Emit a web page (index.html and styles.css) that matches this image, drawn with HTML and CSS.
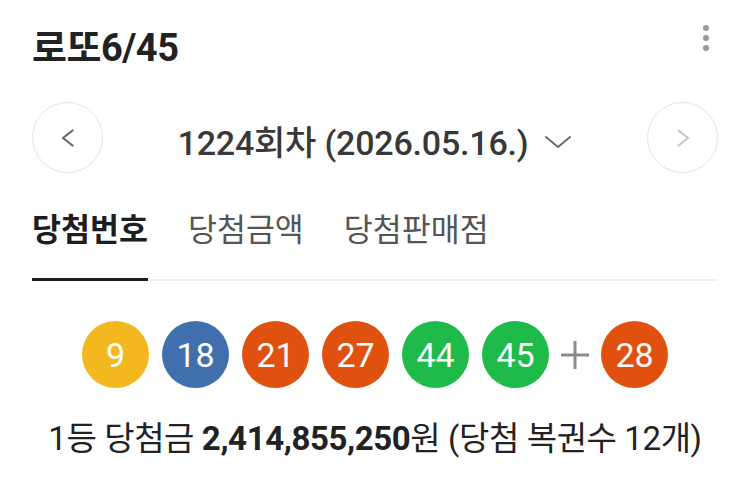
FILE: index.html
```html
<!DOCTYPE html>
<html lang="ko">
<head>
<meta charset="utf-8">
<link rel="stylesheet" href="styles.css">
</head>
<body>
<div class="page">
  <header class="header">
    <h1 class="title">로또6/45</h1>
    <div class="kebab"><span></span><span></span><span></span></div>
  </header>
  <div class="round-nav">
    <button class="circle-btn prev" aria-label="이전">
      <svg width="20" height="24" viewBox="0 0 20 24"><path d="M14.5 4.5 L5 12 L14.5 19.5" fill="none" stroke="#666" stroke-width="2.2" stroke-linecap="round" stroke-linejoin="round"/></svg>
    </button>
    <div class="round-title">1224회차 (2026.05.16.)
      <svg class="caret" width="28" height="16" viewBox="0 0 28 16"><path d="M2 3 L14 13 L26 3" fill="none" stroke="#666" stroke-width="1.8" stroke-linecap="round" stroke-linejoin="round"/></svg>
    </div>
    <button class="circle-btn next" aria-label="다음">
      <svg width="20" height="24" viewBox="0 0 20 24"><path d="M5.5 4.5 L15 12 L5.5 19.5" fill="none" stroke="#c8c8c8" stroke-width="2.2" stroke-linecap="round" stroke-linejoin="round"/></svg>
    </button>
  </div>
  <nav class="tabs">
    <div class="tab active">당첨번호</div>
    <div class="tab">당첨금액</div>
    <div class="tab">당첨판매점</div>
  </nav>
  <div class="balls">
    <span class="ball yellow">9</span>
    <span class="ball blue">18</span>
    <span class="ball red">21</span>
    <span class="ball red">27</span>
    <span class="ball green">44</span>
    <span class="ball green">45</span>
    <span class="plus">
      <svg width="30" height="30" viewBox="0 0 30 30"><path d="M15 1 V29 M1 15 H29" stroke="#8a8a8a" stroke-width="3"/></svg>
    </span>
    <span class="ball red">28</span>
  </div>
  <p class="prize">1등 당첨금 <b>2,414,855,250</b>원 (당첨 복권수 12개)</p>
</div>
</body>
</html>
```
FILE: styles.css
```css
* { box-sizing: border-box; }
html, body { margin: 0; padding: 0; background: #fff; }
body {
  font-family: Roboto, "Noto Sans CJK KR", sans-serif;
  color: #222;
  width: 750px;
  height: 490px;
  overflow: hidden;
}
.page { padding: 0 32px; }
.header {
  height: 94px;
  display: flex;
  align-items: center;
  justify-content: space-between;
  padding-bottom: 6px;
}
.title {
  margin: 0;
  font-size: 38px;
  font-weight: 700;
  color: #222;
  letter-spacing: -0.5px;
}
.kebab {
  display: flex;
  flex-direction: column;
  gap: 4px;
  margin-right: 9px;
  margin-top: -12px;
}
.kebab span {
  width: 6px;
  height: 6px;
  border-radius: 50%;
  background: #999;
}
.round-nav {
  display: flex;
  align-items: center;
  justify-content: space-between;
  margin-top: 8px;
}
.circle-btn {
  width: 71px;
  height: 71px;
  border-radius: 50%;
  border: 1.5px solid #e4e4e4;
  background: #fff;
  display: flex;
  align-items: center;
  justify-content: center;
  padding: 0;
}
.round-title {
  font-size: 34px;
  font-weight: 500;
  color: #383838;
  display: flex;
  align-items: center;
  gap: 16px;
  letter-spacing: -0.2px;
  padding-top: 6px;
}
.caret { margin-top: 2px; }
.tabs {
  display: flex;
  gap: 40px;
  margin-top: 26px;
  border-bottom: 2px solid #eee;
}
.tab {
  font-size: 31.5px;
  color: #555;
  padding: 5px 0 29px;
  position: relative;
}
.tab.active {
  font-weight: 700;
  color: #1e1e1e;
}
.tab.active::after {
  content: "";
  position: absolute;
  left: 0;
  right: 0;
  bottom: -2px;
  height: 3px;
  background: #1e1e1e;
}
.balls {
  display: flex;
  justify-content: center;
  align-items: center;
  gap: 13px;
  margin-top: 40px;
}
.ball {
  width: 67px;
  height: 67px;
  border-radius: 50%;
  color: #fff;
  font-size: 34px;
  display: flex;
  align-items: center;
  justify-content: center;
}
.yellow { background: #f3b81f; }
.blue { background: #3f6fad; }
.red { background: #e0500f; }
.green { background: #1ebb4b; }
.plus { display: flex; margin: 0 -2px; }
.prize {
  margin: 24px 0 0;
  text-align: center;
  font-size: 33px;
  color: #222;
  letter-spacing: -0.4px;
}
.prize b { font-weight: 700; }
```
